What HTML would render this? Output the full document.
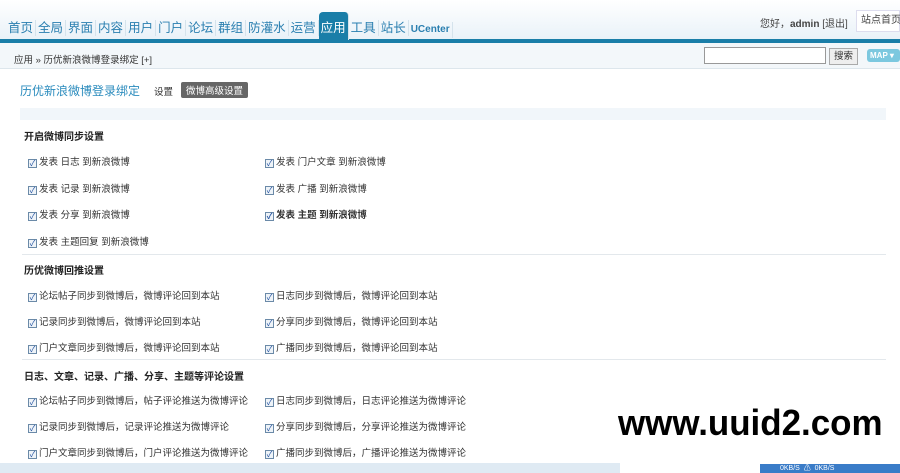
<!DOCTYPE html>
<html><head><meta charset="utf-8"><style>
*{margin:0;padding:0;box-sizing:border-box}
body{width:900px;height:473px;overflow:hidden;background:#fff;font-family:"Liberation Sans","Noto Sans CJK SC",sans-serif;font-size:9.5px;color:#333;position:relative}
.hd{position:absolute;left:0;top:0;width:900px;height:41px;background:linear-gradient(#fff,#e8f1f8)}
.line{position:absolute;left:0;top:39px;width:900px;height:4px;background:#1a7ea8}
.nav{position:absolute;left:6px;top:20px;font-size:12.5px;color:#2a7fb0;white-space:nowrap}
.nav span{display:inline-block;padding:0 2px;border-right:1px solid #d5e3ec;line-height:16px}
.nav .on{background:#1a7ea8;color:#fff;border-radius:4px 4px 0 0;padding:8px 2px 4px;margin-top:-8px;vertical-align:top}
.bc{position:absolute;left:0;top:43px;width:900px;height:26px;background:#f3f7fa;border-bottom:1px solid #dde6ec}
.a{position:absolute;white-space:nowrap}
.cb{display:inline-block;width:9px;height:9px;border:1px solid #6b8aa8;background:#eef3f8;margin-right:2px;vertical-align:-1px;font-size:8px;line-height:7px;color:#2050a0;text-align:center;font-style:normal}
.h{font-weight:bold;color:#222;font-size:10px}
.sep{position:absolute;left:22px;width:864px;height:1px;background:#e3e8ec}
</style></head><body>
<div class="hd"></div><div class="line"></div>
<div class="nav"><span>首页</span><span>全局</span><span>界面</span><span>内容</span><span>用户</span><span>门户</span><span>论坛</span><span>群组</span><span>防灌水</span><span>运营</span><span class="on">应用</span><span>工具</span><span>站长</span><span style="font-size:10px;font-weight:bold">UCenter</span></div>
<div class="a" style="left:760px;top:15px;font-size:10px;color:#444">您好，<b>admin</b> [退出]</div>
<div class="a" style="left:856px;top:10px;width:44px;height:22px;background:#fff;border:1px solid #dde;font-size:10px;line-height:20px;padding-left:4px;color:#444">站点首页</div>
<div class="bc"></div>
<div class="a" style="left:14px;top:52px;color:#333">应用 » 历优新浪微博登录绑定 [+]</div>
<div class="a" style="left:704px;top:47px;width:122px;height:17px;border:1px solid #999;background:#fff"></div>
<div class="a" style="left:829px;top:48px;width:29px;height:17px;border:1px solid #aaa;background:#eee;text-align:center;line-height:15px">搜索</div>
<div class="a" style="left:867px;top:49px;width:33px;height:13px;background:#7cc8df;color:#fff;border-radius:3px;font-size:8px;font-weight:bold;line-height:13px;padding-left:3px">MAP ▾</div>
<div class="a" style="left:20px;top:82px;font-size:12px;color:#2a8bbd">历优新浪微博登录绑定</div>
<div class="a" style="left:154px;top:84px">设置</div>
<div class="a" style="left:181px;top:82px;background:#666;color:#fff;padding:1px 5px;border-radius:2px">微博高级设置</div>
<div class="a" style="left:20px;top:108px;width:866px;height:12px;background:#f1f6fa"></div>
<div class="a h" style="left:24px;top:128px">开启微博同步设置</div>
<div class="a" style="left:28px;top:154px"><i class="cb">✓</i>发表 日志 到新浪微博</div>
<div class="a" style="left:265px;top:154px"><i class="cb">✓</i>发表 门户文章 到新浪微博</div>
<div class="a" style="left:28px;top:181px"><i class="cb">✓</i>发表 记录 到新浪微博</div>
<div class="a" style="left:265px;top:181px"><i class="cb">✓</i>发表 广播 到新浪微博</div>
<div class="a" style="left:28px;top:207px"><i class="cb">✓</i>发表 分享 到新浪微博</div>
<div class="a" style="left:265px;top:207px;font-weight:bold"><i class="cb">✓</i>发表 主题 到新浪微博</div>
<div class="a" style="left:28px;top:234px"><i class="cb">✓</i>发表 主题回复 到新浪微博</div>
<div class="sep" style="top:254px"></div>
<div class="a h" style="left:24px;top:262px">历优微博回推设置</div>
<div class="a" style="left:28px;top:288px"><i class="cb">✓</i>论坛帖子同步到微博后，微博评论回到本站</div>
<div class="a" style="left:265px;top:288px"><i class="cb">✓</i>日志同步到微博后，微博评论回到本站</div>
<div class="a" style="left:28px;top:314px"><i class="cb">✓</i>记录同步到微博后，微博评论回到本站</div>
<div class="a" style="left:265px;top:314px"><i class="cb">✓</i>分享同步到微博后，微博评论回到本站</div>
<div class="a" style="left:28px;top:340px"><i class="cb">✓</i>门户文章同步到微博后，微博评论回到本站</div>
<div class="a" style="left:265px;top:340px"><i class="cb">✓</i>广播同步到微博后，微博评论回到本站</div>
<div class="sep" style="top:359px"></div>
<div class="a h" style="left:24px;top:368px">日志、文章、记录、广播、分享、主题等评论设置</div>
<div class="a" style="left:28px;top:393px"><i class="cb">✓</i>论坛帖子同步到微博后，帖子评论推送为微博评论</div>
<div class="a" style="left:265px;top:393px"><i class="cb">✓</i>日志同步到微博后，日志评论推送为微博评论</div>
<div class="a" style="left:28px;top:419px"><i class="cb">✓</i>记录同步到微博后，记录评论推送为微博评论</div>
<div class="a" style="left:265px;top:419px"><i class="cb">✓</i>分享同步到微博后，分享评论推送为微博评论</div>
<div class="a" style="left:28px;top:445px"><i class="cb">✓</i>门户文章同步到微博后，门户评论推送为微博评论</div>
<div class="a" style="left:265px;top:445px"><i class="cb">✓</i>广播同步到微博后，广播评论推送为微博评论</div>
<div class="a" style="left:0;top:463px;width:620px;height:10px;background:#dfeaf3"></div>
<div class="a" style="left:760px;top:464px;width:140px;height:9px;background:#3a7cc8;color:#fff;font-size:7px;line-height:9px;padding-left:20px">0KB/S &nbsp;⚠ &nbsp;0KB/S</div>
<div class="a" style="left:618px;top:402px;font-size:36px;font-weight:bold;color:#000;transform:scaleX(0.97);transform-origin:left top">www.uuid2.com</div>
</body></html>
